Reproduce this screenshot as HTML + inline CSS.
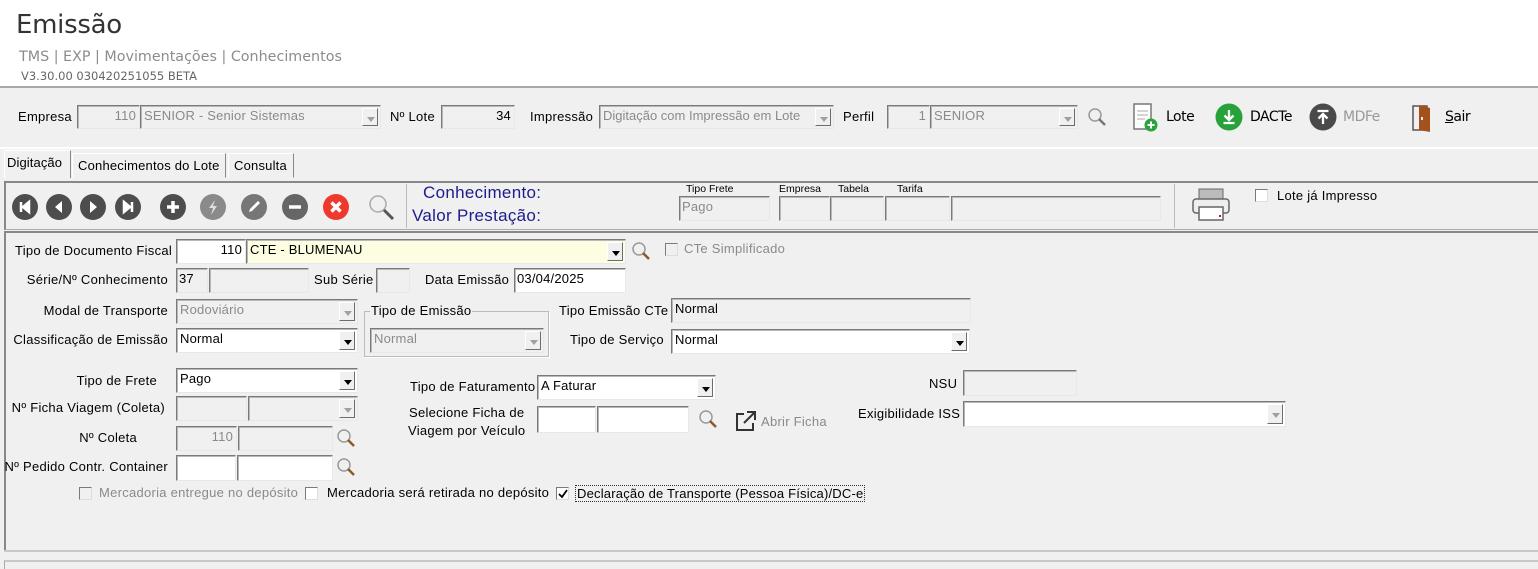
<!DOCTYPE html>
<html><head><meta charset="utf-8">
<style>
*{box-sizing:border-box;margin:0;padding:0}
body{width:1538px;height:569px;overflow:hidden;background:#f0f0f0;font-family:"Liberation Sans",Arial,sans-serif;font-size:13px;color:#000;position:relative}
.a{position:absolute;white-space:nowrap}
.l{position:absolute;white-space:nowrap;font-size:13px;line-height:14px;letter-spacing:0.27px}
.r{text-align:right}
.f{position:absolute;border:1px solid;border-color:#7a7a7a #e8e8e8 #e8e8e8 #7a7a7a;box-shadow:inset 1px 1px 0 #b8b8b8;background:#f0f0f0;font-size:13px;line-height:20px;padding:0 3px;white-space:nowrap;overflow:hidden;letter-spacing:0.2px}
.w{background:#fff}
.g{color:#8a8a8a}
.btn{position:absolute;top:2px;right:2px;bottom:2px;width:16px;background:#f0f0f0;border:1px solid;border-color:#fff #6d6d6d #6d6d6d #fff}
.btn:after{content:"";position:absolute;left:4px;top:8px;border-left:4px solid transparent;border-right:4px solid transparent;border-top:5px solid #000}
.btn.d:after{border-top-color:#a0a0a0}
.cb{position:absolute;width:13px;height:13px;background:#fff;border:1px solid;border-color:#7a7a7a #ddd #ddd #7a7a7a}
.cb.d{background:#f0f0f0}
.c{position:absolute;width:26px;height:26px;border-radius:50%;background:#4d4d4d}
.sm{position:absolute;font-size:10.5px;white-space:nowrap}
</style></head><body>
<div class="a" style="left:0;top:0;width:1538px;height:86px;background:#fff"></div>
<div class="a" style="left:16px;top:10px;font-size:26px;color:#333;font-family:'DejaVu Sans',sans-serif;letter-spacing:-0.3px">Emissão</div>
<div class="a" style="left:19px;top:49px;font-size:14.3px;color:#8c8c8c;font-family:'DejaVu Sans',sans-serif">TMS | EXP | Movimentações | Conhecimentos</div>
<div class="a" style="left:21px;top:69px;font-size:11.5px;color:#666;font-family:'DejaVu Sans',sans-serif">V3.30.00 030420251055 BETA</div>
<div class="a" style="left:0;top:86px;width:1538px;height:2px;background:#a8a8a8"></div>

<!-- header row -->
<div class="l" style="left:18px;top:110px">Empresa</div>
<div class="f r g" style="left:77px;top:105px;width:63px;height:24px">110</div>
<div class="f g" style="left:140px;top:105px;width:241px;height:24px">SENIOR - Senior Sistemas<div class="btn d"></div></div>
<div class="l" style="left:390px;top:110px">Nº Lote</div>
<div class="f r" style="left:441px;top:105px;width:74px;height:24px">34</div>
<div class="l" style="left:530px;top:110px">Impressão</div>
<div class="f g" style="left:599px;top:105px;width:235px;height:24px;letter-spacing:0">Digitação com Impressão em Lote<div class="btn d"></div></div>
<div class="l" style="left:843px;top:110px">Perfil</div>
<div class="f r g" style="left:887px;top:105px;width:43px;height:24px">1</div>
<div class="f g" style="left:930px;top:105px;width:148px;height:24px">SENIOR<div class="btn d"></div></div>
<svg class="a" style="left:1087px;top:107px" width="22" height="22"><circle cx="8" cy="8" r="6" fill="none" stroke="#999" stroke-width="1.5"/><line x1="12" y1="12" x2="18" y2="18" stroke="#777" stroke-width="2.5"/></svg>
<svg class="a" style="left:1132px;top:103px" width="28" height="30"><rect x="2" y="1" width="17" height="25" fill="#fff" stroke="#777" stroke-width="1.5"/><line x1="5" y1="8" x2="16" y2="8" stroke="#aaa"/><line x1="5" y1="12" x2="16" y2="12" stroke="#aaa"/><line x1="5" y1="16" x2="13" y2="16" stroke="#aaa"/><circle cx="19" cy="22" r="6.5" fill="#2aa43a"/><path d="M19 18.5v7M15.5 22h7" stroke="#fff" stroke-width="2"/></svg>
<div class="a" style="left:1166px;top:109px;font-size:14px;font-family:'DejaVu Sans',sans-serif;letter-spacing:-0.5px">Lote</div>
<svg class="a" style="left:1215px;top:103px" width="28" height="28"><circle cx="14" cy="14" r="13.5" fill="#27a13a"/><path d="M14 7v10M9.5 12.5l4.5 4.5 4.5-4.5M8.5 20h11" stroke="#fff" stroke-width="2.3" fill="none"/></svg>
<div class="a" style="left:1250px;top:109px;font-size:14px;font-family:'DejaVu Sans',sans-serif;letter-spacing:-0.5px">DACTe</div>
<svg class="a" style="left:1309px;top:103px" width="28" height="28"><circle cx="14" cy="14" r="13.5" fill="#4a4a4a"/><path d="M8.5 8h11M14 21V11M9.5 15.5l4.5-4.5 4.5 4.5" stroke="#fff" stroke-width="2.3" fill="none"/></svg>
<div class="a" style="left:1343px;top:109px;font-size:14px;color:#999;font-family:'DejaVu Sans',sans-serif;letter-spacing:-0.5px">MDFe</div>
<svg class="a" style="left:1410px;top:103px" width="26" height="30"><rect x="3" y="3" width="14" height="24" fill="none" stroke="#555" stroke-width="1.5"/><path d="M9 2l11 3v24l-11-2z" fill="#a4511c"/><rect x="11" y="14" width="2" height="3" fill="#eee"/></svg>
<div class="a" style="left:1445px;top:109px;font-size:14px;font-family:'DejaVu Sans',sans-serif;letter-spacing:-0.5px"><u>S</u>air</div>

<div class="a" style="left:0;top:147px;width:1538px;height:2px;background:#fff"></div>
<!-- tabs -->
<div class="a" style="left:4px;top:150px;width:67px;height:28px;border:1px solid;border-bottom:none;border-color:#fff #888 #888 #fff;background:#f0f0f0"></div>
<div class="l" style="left:7px;top:156px;letter-spacing:0.1px">Digitação</div>
<div class="a" style="left:72px;top:153px;width:154px;height:25px;border:1px solid;border-color:#fff #888 transparent #fff"></div>
<div class="l" style="left:78px;top:159px;letter-spacing:0.2px">Conhecimentos do Lote</div>
<div class="a" style="left:228px;top:153px;width:66px;height:25px;border:1px solid;border-color:#fff #888 transparent #fff"></div>
<div class="l" style="left:234px;top:159px;letter-spacing:0.2px">Consulta</div>

<!-- toolbar panel -->
<div class="a" style="left:4px;top:181px;width:1534px;height:49px;border-top:2px solid #888;border-left:2px solid #888;border-bottom:1px solid #aaa"></div>
<div class="c" style="left:12px;top:194px"></div><svg class="a" style="left:12px;top:194px" width="26" height="26"><path d="M9 8v10M17 8l-6 5 6 5z" stroke="#fff" stroke-width="2.5" fill="#fff"/></svg>
<div class="c" style="left:46px;top:194px"></div><svg class="a" style="left:46px;top:194px" width="26" height="26"><path d="M16 7l-7 6 7 6z" fill="#fff"/></svg>
<div class="c" style="left:80px;top:194px"></div><svg class="a" style="left:80px;top:194px" width="26" height="26"><path d="M10 7l7 6-7 6z" fill="#fff"/></svg>
<div class="c" style="left:115px;top:194px"></div><svg class="a" style="left:115px;top:194px" width="26" height="26"><path d="M17 8v10M9 8l6 5-6 5z" stroke="#fff" stroke-width="2.5" fill="#fff"/></svg>
<div class="c" style="left:160px;top:194px"></div><svg class="a" style="left:160px;top:194px" width="26" height="26"><path d="M13 7v12M7 13h12" stroke="#fff" stroke-width="3.5"/></svg>
<div class="c" style="left:200px;top:194px;background:#8a8a8a"></div><svg class="a" style="left:200px;top:194px" width="26" height="26"><path d="M15 6l-6 8h4l-2 7 6-9h-4z" fill="#ddd"/></svg>
<div class="c" style="left:241px;top:194px;background:#777"></div><svg class="a" style="left:241px;top:194px" width="26" height="26"><path d="M8 18l1-3 8-8 2 2-8 8z" fill="#fff"/></svg>
<div class="c" style="left:282px;top:194px;background:#666"></div><svg class="a" style="left:282px;top:194px" width="26" height="26"><path d="M7 13h12" stroke="#fff" stroke-width="3.5"/></svg>
<div class="c" style="left:323px;top:194px;background:#ee3a2c"></div><svg class="a" style="left:323px;top:194px" width="26" height="26"><path d="M8.5 8.5l9 9M17.5 8.5l-9 9" stroke="#fff" stroke-width="3.5"/></svg>
<svg class="a" style="left:367px;top:193px" width="30" height="30"><circle cx="11" cy="11" r="8" fill="none" stroke="#aaa" stroke-width="1.5"/><line x1="17" y1="17" x2="26" y2="26" stroke="#555" stroke-width="3"/></svg>
<div class="a" style="left:406px;top:184px;width:1px;height:44px;background:#bbb"></div>
<div class="a" style="left:423px;top:183px;font-size:17px;color:#1c1c8c;letter-spacing:0.3px">Conhecimento:</div>
<div class="a" style="left:412px;top:206px;font-size:17px;color:#1c1c8c;letter-spacing:0.3px">Valor Prestação:</div>
<div class="sm" style="left:686px;top:183px">Tipo Frete</div>
<div class="sm" style="left:779px;top:183px">Empresa</div>
<div class="sm" style="left:838px;top:183px">Tabela</div>
<div class="sm" style="left:897px;top:183px">Tarifa</div>
<div class="f g" style="left:679px;top:196px;width:91px;height:25px;padding-left:2px">Pago</div>
<div class="f" style="left:779px;top:196px;width:51px;height:25px"></div>
<div class="f" style="left:830px;top:196px;width:54px;height:25px"></div>
<div class="f" style="left:885px;top:196px;width:65px;height:25px"></div>
<div class="f" style="left:951px;top:196px;width:210px;height:25px"></div>
<div class="a" style="left:1174px;top:184px;width:1px;height:44px;background:#bbb"></div>
<svg class="a" style="left:1191px;top:187px" width="42" height="36"><rect x="8" y="2" width="24" height="10" fill="#bbb" stroke="#666"/><rect x="2" y="12" width="36" height="14" rx="3" fill="#eee" stroke="#666" stroke-width="1.5"/><rect x="8" y="20" width="24" height="13" fill="#fff" stroke="#666" stroke-width="1.5"/><rect x="28" y="28" width="2" height="2" fill="#d04"/></svg>
<div class="cb" style="left:1255px;top:189px"></div>
<div class="l" style="left:1277px;top:189px">Lote já Impresso</div>

<!-- main panel -->
<div class="a" style="left:4px;top:231px;width:1534px;height:320px;border-top:2px solid #888;border-left:2px solid #888"></div>

<div class="l r" style="left:0;top:244px;width:172px">Tipo de Documento Fiscal</div>
<div class="f w r" style="left:176px;top:239px;width:70px;height:25px">110</div>
<div class="f" style="left:246px;top:239px;width:380px;height:25px;background:#fdfde1">CTE - BLUMENAU<div class="btn"></div></div>
<svg class="a" style="left:631px;top:241px" width="22" height="22"><circle cx="8" cy="8" r="6" fill="none" stroke="#999" stroke-width="1.5"/><line x1="12" y1="12" x2="18" y2="18" stroke="#8a5a2a" stroke-width="2.5"/></svg>
<div class="cb d" style="left:665px;top:243px"></div>
<div class="l g" style="left:684px;top:242px">CTe Simplificado</div>

<div class="l r" style="left:0;top:273px;width:168px">Série/Nº Conhecimento</div>
<div class="f" style="left:176px;top:268px;width:32px;height:25px;padding-left:2px">37</div>
<div class="f" style="left:209px;top:268px;width:100px;height:25px"></div>
<div class="l" style="left:314px;top:273px">Sub Série</div>
<div class="f" style="left:376px;top:268px;width:34px;height:25px"></div>
<div class="l" style="left:425px;top:273px">Data Emissão</div>
<div class="f w" style="left:514px;top:268px;width:112px;height:25px;padding-left:2px">03/04/2025</div>

<div class="l r" style="left:0;top:304px;width:168px">Modal de Transporte</div>
<div class="f g" style="left:176px;top:299px;width:182px;height:25px">Rodoviário<div class="btn d"></div></div>
<div class="a" style="left:364px;top:311px;width:185px;height:46px;border:1px solid #bbb;box-shadow:1px 1px 0 #fff"></div>
<div class="l" style="left:370px;top:304px;background:#f0f0f0;padding:0 1px">Tipo de Emissão</div>
<div class="f g" style="left:370px;top:328px;width:174px;height:25px">Normal<div class="btn d"></div></div>
<div class="l" style="left:559px;top:304px">Tipo Emissão CTe</div>
<div class="f" style="left:671px;top:298px;width:300px;height:25px">Normal</div>

<div class="l r" style="left:0;top:333px;width:168px">Classificação de Emissão</div>
<div class="f w" style="left:176px;top:328px;width:182px;height:25px">Normal<div class="btn"></div></div>
<div class="l" style="left:570px;top:333px">Tipo de Serviço</div>
<div class="f w" style="left:671px;top:329px;width:299px;height:25px">Normal<div class="btn"></div></div>

<div class="l r" style="left:0;top:374px;width:157px">Tipo de Frete</div>
<div class="f w" style="left:176px;top:368px;width:182px;height:25px">Pago<div class="btn"></div></div>
<div class="l" style="left:410px;top:380px">Tipo de Faturamento</div>
<div class="f w" style="left:537px;top:375px;width:179px;height:25px">A Faturar<div class="btn"></div></div>
<div class="l" style="left:929px;top:377px">NSU</div>
<div class="f" style="left:963px;top:370px;width:114px;height:26px"></div>

<div class="l r" style="left:0;top:401px;width:165px">Nº Ficha Viagem (Coleta)</div>
<div class="f" style="left:176px;top:396px;width:71px;height:25px"></div>
<div class="f" style="left:248px;top:396px;width:110px;height:25px"><div class="btn d"></div></div>
<div class="l" style="left:409px;top:406px">Selecione Ficha de</div>
<div class="l" style="left:408px;top:424px">Viagem por Veículo</div>
<div class="f w" style="left:537px;top:406px;width:59px;height:27px"></div>
<div class="f w" style="left:597px;top:406px;width:92px;height:27px"></div>
<svg class="a" style="left:698px;top:409px" width="22" height="22"><circle cx="8" cy="8" r="6" fill="none" stroke="#999" stroke-width="1.5"/><line x1="12" y1="12" x2="18" y2="18" stroke="#8a5a2a" stroke-width="2.5"/></svg>
<svg class="a" style="left:735px;top:410px" width="22" height="22"><path d="M9 4H2v16h16v-7" fill="none" stroke="#333" stroke-width="2"/><path d="M9 13L19 3M12 2h8v8" fill="none" stroke="#333" stroke-width="2"/></svg>
<div class="l g" style="left:761px;top:415px">Abrir Ficha</div>
<div class="l" style="left:858px;top:407px">Exigibilidade ISS</div>
<div class="f w" style="left:963px;top:401px;width:323px;height:26px"><div class="btn d"></div></div>

<div class="l r" style="left:0;top:431px;width:137px">Nº Coleta</div>
<div class="f r g" style="left:176px;top:426px;width:61px;height:25px">110</div>
<div class="f" style="left:238px;top:426px;width:95px;height:25px"></div>
<svg class="a" style="left:336px;top:428px" width="22" height="22"><circle cx="8" cy="8" r="6" fill="none" stroke="#999" stroke-width="1.5"/><line x1="12" y1="12" x2="18" y2="18" stroke="#8a5a2a" stroke-width="2.5"/></svg>

<div class="l r" style="left:0;top:460px;width:168px">Nº Pedido Contr. Container</div>
<div class="f w" style="left:176px;top:455px;width:60px;height:26px"></div>
<div class="f w" style="left:237px;top:455px;width:96px;height:26px"></div>
<svg class="a" style="left:336px;top:457px" width="22" height="22"><circle cx="8" cy="8" r="6" fill="none" stroke="#999" stroke-width="1.5"/><line x1="12" y1="12" x2="18" y2="18" stroke="#8a5a2a" stroke-width="2.5"/></svg>

<div class="cb d" style="left:79px;top:487px"></div>
<div class="l g" style="left:99px;top:486px">Mercadoria entregue no depósito</div>
<div class="cb" style="left:305px;top:487px"></div>
<div class="l" style="left:327px;top:486px">Mercadoria será retirada no depósito</div>
<div class="cb" style="left:556px;top:487px"></div>
<svg class="a" style="left:557px;top:488px" width="12" height="12"><path d="M2 6l3 3 5-7" stroke="#000" stroke-width="1.8" fill="none"/></svg>
<div class="l" style="left:575px;top:485px;border:1px dotted #333;padding:0 1px;line-height:15px;letter-spacing:0.2px">Declaração de Transporte (Pessoa Física)/DC-e</div>

<div class="a" style="left:4px;top:550px;width:1534px;height:2px;background:#c8c8c8"></div>
<div class="a" style="left:4px;top:560px;width:1534px;height:9px;border-top:2px solid #c8c8c8;border-left:1px solid #aaa"></div>
</body></html>
